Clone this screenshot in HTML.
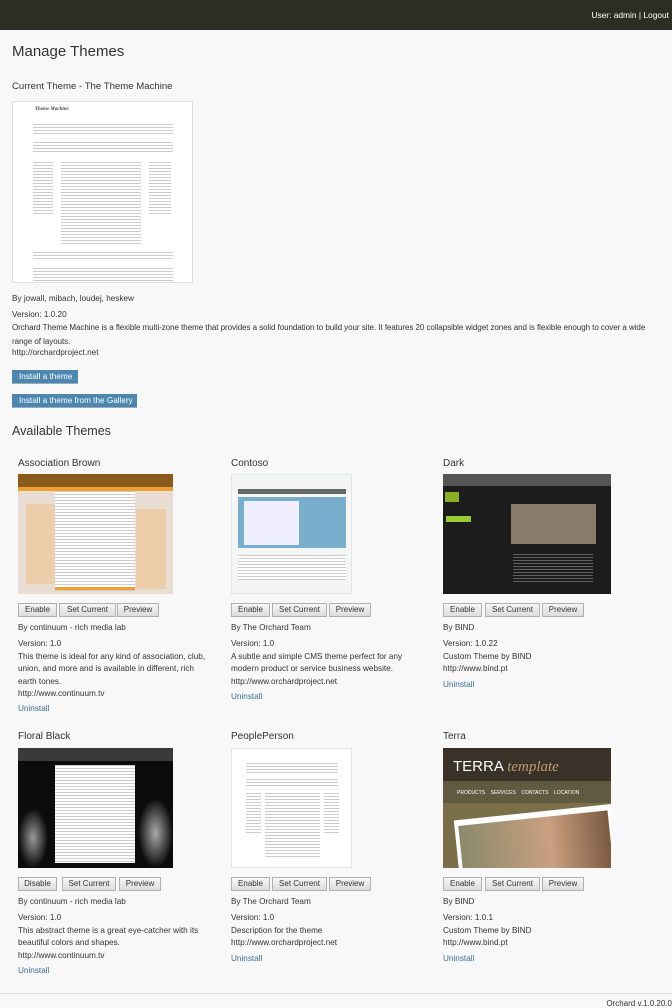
<!DOCTYPE html>
<html><head><meta charset="utf-8"><style>
*{margin:0;padding:0;box-sizing:border-box}
body{width:672px;height:1005px;overflow:hidden;background:#f8f8f8;font-family:"Liberation Sans",sans-serif;color:#333;font-size:8.2px;position:relative}
.a{position:absolute;white-space:nowrap}
#hd{position:absolute;left:0;top:0;width:672px;height:30px;background:#2e2d24}
.t{font-size:10px;color:#333}
.btn{position:absolute;height:14px;border:1px solid #b0b0b0;background:linear-gradient(#f6f6f6,#dcdcdc);font-size:8px;color:#333;text-align:center;line-height:12px}
.blue{position:absolute;height:14px;background:#4b87af;border-bottom:1px solid #9ab;color:#fff;font-size:8.2px;line-height:13px;padding-left:7px;white-space:nowrap}
.lk{color:#3a6d99}
.lines{background:repeating-linear-gradient(#ccc 0 1px,transparent 1px 3px)}
.col{position:absolute;width:200px;line-height:12.4px}
.col .by{margin-bottom:4px}
.col .u{margin-top:3px;color:#3a6d99}
</style></head><body>
<div id="hd"></div>
<div class="a" style="right:3px;top:10px;color:#fff;font-size:8.4px">User: admin | Logout</div>
<div class="a" style="left:12px;top:43px;font-size:15px;color:#333">Manage Themes</div>
<div class="a" style="left:12px;top:81px;font-size:9.6px">Current Theme - The Theme Machine</div>
<div class="a" style="left:12px;top:101px;width:181px;height:182px;background:#fff;border:1px solid #ddd">
 <div class="a" style="left:22px;top:5px;font:italic bold 5px 'Liberation Serif',serif;color:#444">Theme Machine</div>
 <div class="a lines" style="left:20px;top:22px;width:140px;height:10px"></div>
 <div class="a lines" style="left:20px;top:40px;width:140px;height:10px"></div>
 <div class="a lines" style="left:20px;top:60px;width:20px;height:52px"></div>
 <div class="a lines" style="left:48px;top:60px;width:80px;height:82px"></div>
 <div class="a lines" style="left:136px;top:60px;width:22px;height:52px"></div>
 <div class="a lines" style="left:20px;top:150px;width:140px;height:8px"></div>
 <div class="a lines" style="left:20px;top:166px;width:140px;height:14px"></div>
</div>
<div class="a" style="left:12px;top:294px">By jowall, mibach, loudej, heskew</div>
<div class="a" style="left:12px;top:310px">Version: 1.0.20</div>
<div class="a" style="left:12px;top:321px;line-height:14px;font-size:8px;letter-spacing:-0.05px">Orchard Theme Machine is a flexible multi-zone theme that provides a solid foundation to build your site. It features 20 collapsible widget zones and is flexible enough to cover a wide<br>range of layouts.</div>
<div class="a" style="left:12px;top:348px">http://orchardproject.net</div>
<div class="blue" style="left:12px;top:370px;width:66px">Install a theme</div>
<div class="blue" style="left:12px;top:394px;width:125px">Install a theme from the Gallery</div>
<div class="a" style="left:12px;top:424px;font-size:12.5px">Available Themes</div>

<!-- row 1 -->
<div class="a t" style="left:18px;top:458px">Association Brown</div>
<div class="a" style="left:18px;top:474px;width:155px;height:120px;background:#e8ddd2">
 <div class="a" style="left:0;top:0;width:155px;height:13px;background:#8a5a1a"></div>
 <div class="a" style="left:0;top:13px;width:155px;height:4px;background:#f0a030"></div>
 <div class="a" style="left:8px;top:30px;width:30px;height:80px;background:#efc89a;opacity:.7"></div>
 <div class="a" style="left:118px;top:35px;width:30px;height:80px;background:#efc89a;opacity:.7"></div>
 <div class="a lines" style="left:37px;top:17px;width:80px;height:100px;background-color:#fff"></div>
 <div class="a" style="left:37px;top:113px;width:80px;height:3px;background:#f0a030"></div>
</div>
<div class="a t" style="left:231px;top:458px">Contoso</div>
<div class="a" style="left:231px;top:474px;width:121px;height:120px;background:#f4f6f6;border:1px solid #e4e4e4">
 <div class="a" style="left:6px;top:14px;width:108px;height:5px;background:#666"></div>
 <div class="a" style="left:6px;top:22px;width:108px;height:51px;background:#78aecb"></div>
 <div class="a" style="left:12px;top:26px;width:55px;height:44px;background:#eef"></div>
 <div class="a lines" style="left:6px;top:80px;width:108px;height:25px;background-color:#fff"></div>
</div>
<div class="a t" style="left:443px;top:458px">Dark</div>
<div class="a" style="left:443px;top:474px;width:168px;height:120px;background:#1c1c1c">
 <div class="a" style="left:0;top:0;width:168px;height:12px;background:#555"></div>
 <div class="a" style="left:2px;top:18px;width:14px;height:10px;background:#8ab020"></div>
 <div class="a" style="left:3px;top:42px;width:25px;height:6px;background:#9c3"></div>
 <div class="a" style="left:68px;top:30px;width:85px;height:40px;background:#8a7a6a"></div>
 <div class="a lines" style="left:70px;top:80px;width:80px;height:30px;opacity:.4"></div>
</div>
<div class="btn" style="left:18px;top:603px;width:39px">Enable</div>
<div class="btn" style="left:59px;top:603px;width:57px">Set Current</div>
<div class="btn" style="left:117px;top:603px;width:42px">Preview</div>
<div class="btn" style="left:231px;top:603px;width:39px">Enable</div>
<div class="btn" style="left:272px;top:603px;width:55px">Set Current</div>
<div class="btn" style="left:329px;top:603px;width:42px">Preview</div>
<div class="btn" style="left:443px;top:603px;width:39px">Enable</div>
<div class="btn" style="left:485px;top:603px;width:55px">Set Current</div>
<div class="btn" style="left:542px;top:603px;width:42px">Preview</div>

<div class="col" style="left:18px;top:622px;width:195px"><div class="by">By continuum - rich media lab</div>Version: 1.0<br>This theme is ideal for any kind of association, club, union, and more and is available in different, rich earth tones.<br>http://www.continuum.tv<div class="u">Uninstall</div></div>
<div class="col" style="left:231px;top:622px;width:200px"><div class="by">By The Orchard Team</div>Version: 1.0<br>A subtle and simple CMS theme perfect for any modern product or service business website.<br>http://www.orchardproject.net<div class="u">Uninstall</div></div>
<div class="col" style="left:443px;top:622px"><div class="by">By BIND</div>Version: 1.0.22<br>Custom Theme by BIND<br>http://www.bind.pt<div class="u">Uninstall</div></div>

<!-- row 2 -->
<div class="a t" style="left:18px;top:731px">Floral Black</div>
<div class="a" style="left:18px;top:748px;width:155px;height:120px;background:#0c0c0c">
 <div class="a" style="left:0;top:0;width:155px;height:13px;background:#3a3a3a"></div>
 <div class="a" style="left:0;top:60px;width:30px;height:60px;background:radial-gradient(#999 0,transparent 70%)"></div>
 <div class="a" style="left:120px;top:50px;width:35px;height:70px;background:radial-gradient(#aaa 0,transparent 70%)"></div>
 <div class="a lines" style="left:37px;top:17px;width:80px;height:98px;background-color:#fff"></div>
</div>
<div class="a t" style="left:231px;top:731px">PeoplePerson</div>
<div class="a" style="left:231px;top:748px;width:121px;height:120px;background:#fff;border:1px solid #e4e4e4">
 <div class="a lines" style="left:14px;top:14px;width:92px;height:10px"></div>
 <div class="a lines" style="left:14px;top:30px;width:92px;height:8px"></div>
 <div class="a lines" style="left:14px;top:44px;width:15px;height:40px"></div>
 <div class="a lines" style="left:33px;top:44px;width:55px;height:64px"></div>
 <div class="a lines" style="left:92px;top:44px;width:15px;height:40px"></div>
</div>
<div class="a t" style="left:443px;top:731px">Terra</div>
<div class="a" style="left:443px;top:748px;width:168px;height:120px;background:#3a3228;overflow:hidden">
 <div class="a" style="left:10px;top:10px;font-size:15px;color:#fff">TERRA <i style="color:#b8a070;font-family:'Liberation Serif',serif">template</i></div>
 <div class="a" style="left:0;top:33px;width:168px;height:22px;background:#5f5a40"></div>
 <div class="a" style="left:14px;top:42px;color:#fff;font-size:5px">PRODUCTS &nbsp;&nbsp; SERVICES &nbsp;&nbsp; CONTACTS &nbsp;&nbsp; LOCATION</div>
 <div class="a" style="left:0;top:55px;width:168px;height:65px;background:#7a6f48"></div>
 <div class="a" style="left:14px;top:64px;width:160px;height:70px;background:#fff;transform:rotate(-6deg)"></div>
 <div class="a" style="left:18px;top:70px;width:150px;height:60px;background:linear-gradient(90deg,#8a8a6a,#c9a080 60%,#7a5a40);transform:rotate(-6deg)"></div>
</div>
<div class="btn" style="left:18px;top:877px;width:39px">Disable</div>
<div class="btn" style="left:62px;top:877px;width:54px">Set Current</div>
<div class="btn" style="left:119px;top:877px;width:42px">Preview</div>
<div class="btn" style="left:231px;top:877px;width:39px">Enable</div>
<div class="btn" style="left:272px;top:877px;width:55px">Set Current</div>
<div class="btn" style="left:329px;top:877px;width:42px">Preview</div>
<div class="btn" style="left:443px;top:877px;width:39px">Enable</div>
<div class="btn" style="left:485px;top:877px;width:55px">Set Current</div>
<div class="btn" style="left:542px;top:877px;width:42px">Preview</div>

<div class="col" style="left:18px;top:896px;width:195px"><div class="by">By continuum - rich media lab</div>Version: 1.0<br>This abstract theme is a great eye-catcher with its beautiful colors and shapes.<br>http://www.continuum.tv<div class="u">Uninstall</div></div>
<div class="col" style="left:231px;top:896px"><div class="by">By The Orchard Team</div>Version: 1.0<br>Description for the theme<br>http://www.orchardproject.net<div class="u">Uninstall</div></div>
<div class="col" style="left:443px;top:896px"><div class="by">By BIND</div>Version: 1.0.1<br>Custom Theme by BIND<br>http://www.bind.pt<div class="u">Uninstall</div></div>

<div class="a" style="left:0;top:993px;width:672px;height:1px;background:#ddd"></div>
<div class="a" style="right:0;top:999px;font-size:8px">Orchard v.1.0.20.0</div>
</body></html>
